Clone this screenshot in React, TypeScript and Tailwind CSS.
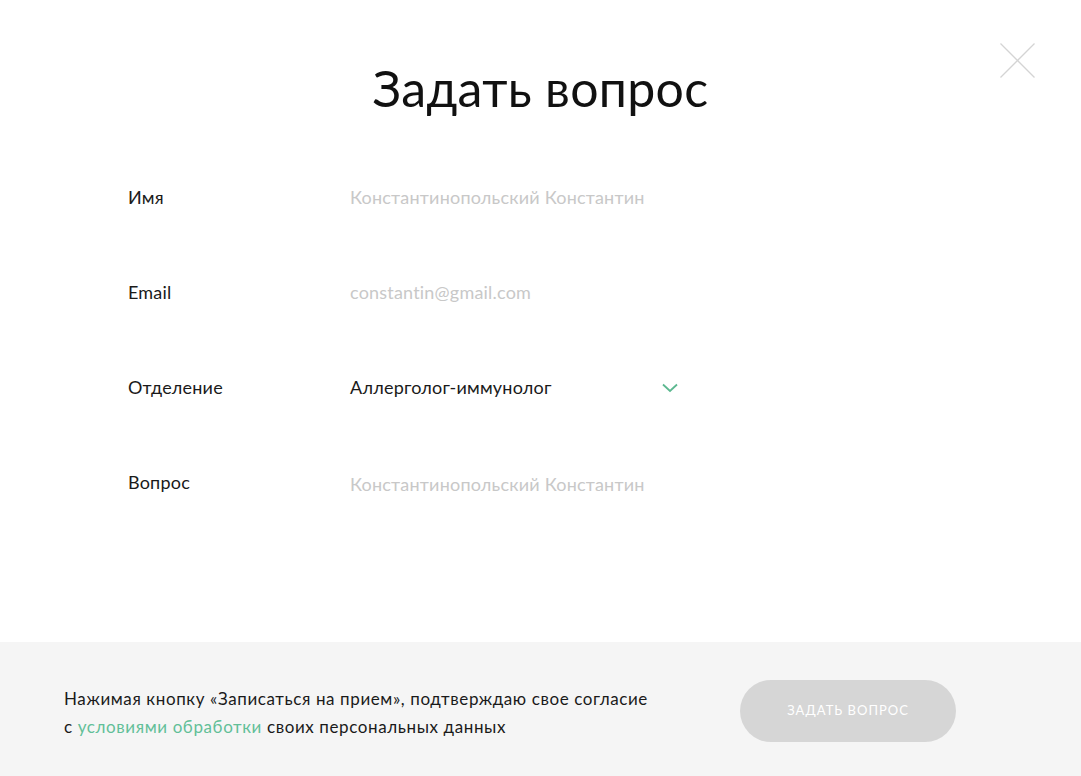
import React from 'react';

const font = { fontFamily: 'Lato, "Open Sans", sans-serif' };

const Row: React.FC<{ label: string; children: React.ReactNode; className?: string }> = ({ label, children, className }) => (
  <div className={`flex ${className ?? ''}`}>
    <div className="w-[190px] shrink-0 h-[65px] flex items-center text-[18px] tracking-[0.2px] text-[#1a1a1a]">{label}</div>
    {children}
  </div>
);

export default function App() {
  return (
    <div className="w-[1081px] h-[776px] bg-white flex flex-col relative overflow-hidden" style={font}>
      <button className="absolute top-[43px] left-[1000px] w-[35px] h-[35px]" aria-label="close">
        <svg viewBox="0 0 35 35" className="w-[35px] h-[35px]">
          <path d="M0.5 0.5 L34.5 34.5 M34.5 0.5 L0.5 34.5" stroke="#d4d4d4" strokeWidth="1.3" fill="none" />
        </svg>
      </button>

      <div className="flex-1">
        <h1 className="text-center text-[50px] leading-none text-[#111] pt-[63px] tracking-[0.3px]">Задать вопрос</h1>

        <div className="mt-[52px] pl-[128px] flex flex-col gap-[30px]">
          <Row label="Имя">
            <div className="w-[445px] h-[65px] flex items-center pl-[32px] text-[18px] tracking-[0.2px] text-[#c8c8c8]">
              Константинопольский Константин
            </div>
          </Row>
          <Row label="Email">
            <div className="w-[382px] h-[65px] flex items-center pl-[32px] text-[18px] tracking-[0.2px] text-[#c8c8c8]">
              constantin@gmail.com
            </div>
          </Row>
          <Row label="Отделение">
            <div className="w-[382px] h-[65px] flex items-center justify-between pl-[32px] pr-[22px] text-[18px] tracking-[0.2px] text-[#1a1a1a]">
              <span>Аллерголог-иммунолог</span>
              <svg viewBox="0 0 16 10" className="w-[16px] h-[10px]">
                <path d="M1 1.5 L8 8 L15 1.5" stroke="#5cb890" strokeWidth="1.8" fill="none" />
              </svg>
            </div>
          </Row>
          <Row label="Вопрос">
            <div className="w-[445px] h-[130px] pt-[21px] pl-[32px] text-[18px] tracking-[0.2px] text-[#c8c8c8]">
              Константинопольский Константин
            </div>
          </Row>
        </div>
      </div>

      <div className="h-[134px] bg-[#f5f5f5] flex items-center pl-[64px]">
        <p className="w-[620px] text-[17px] leading-[28px] tracking-[0.6px] text-[#1a1a1a] mt-[8px]">
          Нажимая кнопку «Записаться на прием», подтверждаю свое согласие
          <br />с <span className="text-[#62bf98]">условиями обработки</span> своих персональных данных
        </p>
        <button className="ml-[56px] w-[216px] h-[62px] rounded-full bg-[#d6d6d6] text-white text-[13px] uppercase tracking-[1px] mt-[4px]">
          Задать вопрос
        </button>
      </div>
    </div>
  );
}
